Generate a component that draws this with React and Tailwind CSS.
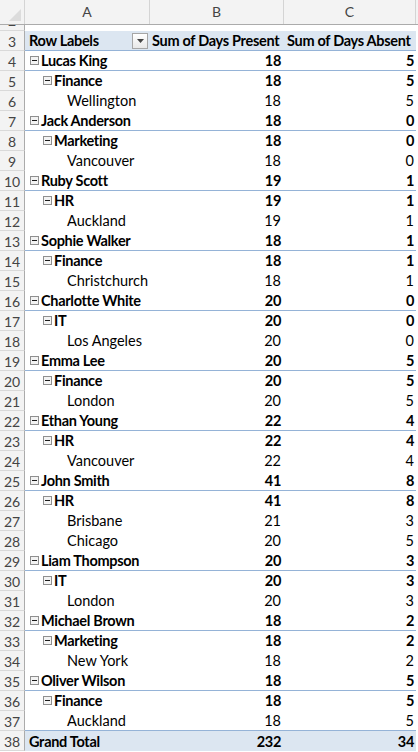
import React from "react";

const data = [
  { n: 4, label: "Lucas King", level: 1, b: 18, c: 5 },
  { n: 5, label: "Finance", level: 2, b: 18, c: 5 },
  { n: 6, label: "Wellington", level: 3, b: 18, c: 5 },
  { n: 7, label: "Jack Anderson", level: 1, b: 18, c: 0 },
  { n: 8, label: "Marketing", level: 2, b: 18, c: 0 },
  { n: 9, label: "Vancouver", level: 3, b: 18, c: 0 },
  { n: 10, label: "Ruby Scott", level: 1, b: 19, c: 1 },
  { n: 11, label: "HR", level: 2, b: 19, c: 1 },
  { n: 12, label: "Auckland", level: 3, b: 19, c: 1 },
  { n: 13, label: "Sophie Walker", level: 1, b: 18, c: 1 },
  { n: 14, label: "Finance", level: 2, b: 18, c: 1 },
  { n: 15, label: "Christchurch", level: 3, b: 18, c: 1 },
  { n: 16, label: "Charlotte White", level: 1, b: 20, c: 0 },
  { n: 17, label: "IT", level: 2, b: 20, c: 0 },
  { n: 18, label: "Los Angeles", level: 3, b: 20, c: 0 },
  { n: 19, label: "Emma Lee", level: 1, b: 20, c: 5 },
  { n: 20, label: "Finance", level: 2, b: 20, c: 5 },
  { n: 21, label: "London", level: 3, b: 20, c: 5 },
  { n: 22, label: "Ethan Young", level: 1, b: 22, c: 4 },
  { n: 23, label: "HR", level: 2, b: 22, c: 4 },
  { n: 24, label: "Vancouver", level: 3, b: 22, c: 4 },
  { n: 25, label: "John Smith", level: 1, b: 41, c: 8 },
  { n: 26, label: "HR", level: 2, b: 41, c: 8 },
  { n: 27, label: "Brisbane", level: 3, b: 21, c: 3 },
  { n: 28, label: "Chicago", level: 3, b: 20, c: 5 },
  { n: 29, label: "Liam Thompson", level: 1, b: 20, c: 3 },
  { n: 30, label: "IT", level: 2, b: 20, c: 3 },
  { n: 31, label: "London", level: 3, b: 20, c: 3 },
  { n: 32, label: "Michael Brown", level: 1, b: 18, c: 2 },
  { n: 33, label: "Marketing", level: 2, b: 18, c: 2 },
  { n: 34, label: "New York", level: 3, b: 18, c: 2 },
  { n: 35, label: "Oliver Wilson", level: 1, b: 18, c: 5 },
  { n: 36, label: "Finance", level: 2, b: 18, c: 5 },
  { n: 37, label: "Auckland", level: 3, b: 18, c: 5 },
];

function Minus() {
  return (
    <svg width="9" height="9" viewBox="0 0 9 9" className="shrink-0 mt-[-2px]">
      <rect x="0.5" y="0.5" width="8" height="8" fill="#f3f3f3" stroke="#8f8f8f" />
      <path d="M2 4.5h5" stroke="#1a1a1a" strokeWidth="1" />
    </svg>
  );
}

function RowNum({ n }) {
  return (
    <div className="w-[25px] h-full shrink-0 flex items-center justify-center pt-[2px] bg-[#f3f3f3] border-r border-b border-r-[#ababab] border-b-[#d9d9d9] text-[#444] text-[14px]">
      {n}
    </div>
  );
}

function PivotRow({ row, last }) {
  const bold = row.level < 3;
  const blue = row.level === 1 || last;
  return (
    <div className="flex h-[20px]">
      <RowNum n={row.n} />
      <div
        className={
          "flex w-[391px] h-full pt-[2px] border-b " +
          (blue ? "border-[#95b3d7]" : "border-white") +
          (bold ? " font-bold tracking-[-0.3px]" : "")
        }
      >
        {row.level === 1 && (
          <div className="w-[125px] flex items-center gap-[2px] pl-[5px]">
            <Minus />
            <span>{row.label}</span>
          </div>
        )}
        {row.level === 2 && (
          <div className="w-[125px] flex items-center gap-[2px] pl-[18px]">
            <Minus />
            <span>{row.label}</span>
          </div>
        )}
        {row.level === 3 && (
          <div className="w-[125px] flex items-center pl-[42px]">
            <span>{row.label}</span>
          </div>
        )}
        <div className="w-[134px] flex items-center justify-end pr-[3px]">{row.b}</div>
        <div className="w-[132px] flex items-center justify-end pr-[2px]">{row.c}</div>
      </div>
    </div>
  );
}

export default function App() {
  return (
    <div className="w-[418px] h-[752px] overflow-hidden bg-white text-black font-['Lato',_'Liberation_Sans',_sans-serif] text-[14.5px] leading-none">
      {/* column letters */}
      <div className="flex h-[25px] bg-[#f3f3f3] border-b border-[#ababab] text-[#444] text-[14px]">
        <div className="w-[25px] shrink-0 border-r border-[#d4d4d4] flex items-end justify-end p-[3px]">
          <svg width="12" height="12" viewBox="0 0 12 12">
            <path d="M12 0V12H0Z" fill="#dcdcdc" />
          </svg>
        </div>
        <div className="w-[125px] border-r border-[#d4d4d4] flex items-center justify-center">A</div>
        <div className="w-[134px] border-r border-[#d4d4d4] flex items-center justify-center">B</div>
        <div className="w-[132px] border-r border-[#d4d4d4] flex items-center justify-center">C</div>
        <div className="flex-1" />
      </div>

      {/* row 2, mostly scrolled out */}
      <div className="flex h-[6px]">
        <div className="w-[25px] h-full shrink-0 overflow-hidden bg-[#f3f3f3] border-r border-b border-r-[#ababab] border-b-[#d9d9d9]">
          <div className="h-[20px] mt-[-14px] flex items-center justify-center text-[#444] text-[14px]">2</div>
        </div>
      </div>

      {/* header row */}
      <div className="flex h-[20px]">
        <RowNum n={3} />
        <div className="flex w-[391px] h-full bg-[#dce6f1] border-b border-[#95b3d7] font-bold tracking-[-0.3px]">
          <div className="w-[125px] flex items-center justify-between pl-[4px] pr-[2px]">
            <span className="pt-[2px]">Row Labels</span>
            <div className="w-[16px] h-[16px] border border-[#a6a6a6] bg-gradient-to-b from-white to-[#e8e8e8] flex items-center justify-center">
              <svg width="7" height="4" viewBox="0 0 7 4">
                <path d="M0 0H7L3.5 4Z" fill="#444" />
              </svg>
            </div>
          </div>
          <div className="w-[134px] flex items-center pl-[2px] pt-[2px] whitespace-nowrap">Sum of Days Present</div>
          <div className="w-[132px] flex items-center pl-[3px] pt-[2px] whitespace-nowrap">Sum of Days Absent</div>
        </div>
      </div>

      {data.map((row, i) => (
        <PivotRow key={row.n} row={row} last={i === data.length - 1} />
      ))}

      {/* grand total */}
      <div className="flex h-[20px]">
        <RowNum n={38} />
        <div className="flex w-[391px] h-full pt-[2px] bg-[#dce6f1] font-bold tracking-[-0.3px]">
          <div className="w-[125px] flex items-center pl-[4px]">Grand Total</div>
          <div className="w-[134px] flex items-center justify-end pr-[3px]">232</div>
          <div className="w-[132px] flex items-center justify-end pr-[2px]">34</div>
        </div>
      </div>
    </div>
  );
}
